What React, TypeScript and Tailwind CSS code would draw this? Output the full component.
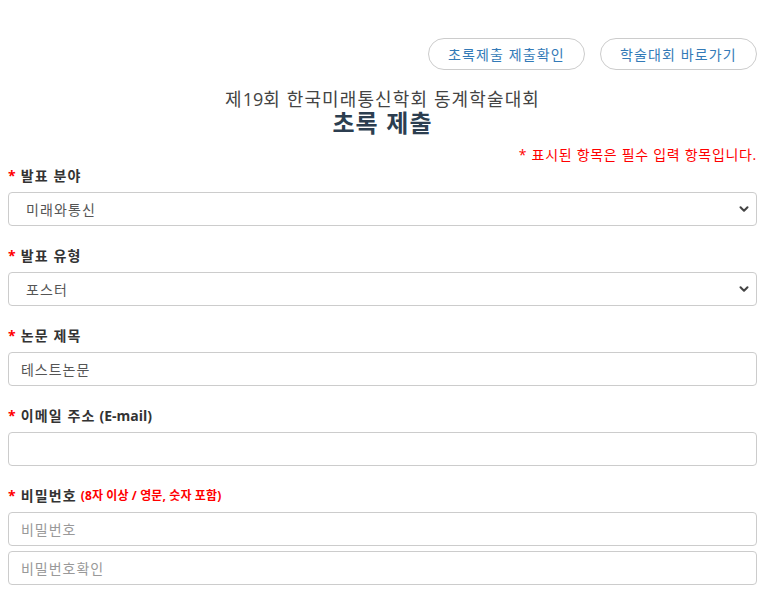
import { ChevronDown } from 'lucide-react';

const FONT = { fontFamily: '"Open Sans", "Noto Sans CJK KR", sans-serif' };

function Label({ text, latin, note }: { text: string; latin?: string; note?: string }) {
  return (
    <div className="h-[16px] flex items-center text-[14px] font-bold text-[#333] mb-[8px] leading-none">
      <span className="text-[#ff0000] mr-[4px]">*</span>
      <span>{text}</span>
      {latin && <span className="tracking-normal ml-[4px]">{latin}</span>}
      {note && <span className="text-[#ff0000] text-[12px] ml-[4px] tracking-[0.01em]">{note}</span>}
    </div>
  );
}

function Select({ value }: { value: string }) {
  return (
    <div className="h-[34px] border border-[#ccc] rounded-[4px] bg-white flex items-center justify-between pl-[17px] pr-[5px] text-[14px] text-[#555]">
      <span>{value}</span>
      <ChevronDown className="w-[14px] h-[14px] text-[#444]" strokeWidth={3.5} />
    </div>
  );
}

function Input({ value, placeholder }: { value?: string; placeholder?: string }) {
  return (
    <input
      readOnly
      defaultValue={value}
      placeholder={placeholder}
      className="block w-full h-[34px] border border-[#ccc] rounded-[4px] bg-white px-[12px] text-[14px] text-[#555] tracking-[0.07em] placeholder:text-[#999] outline-none"
      style={FONT}
    />
  );
}

export default function App() {
  return (
    <div className="bg-white w-[762px] h-[602px] overflow-hidden pl-[8px] pr-[5px] tracking-[0.07em]" style={FONT}>
      <div className="flex justify-end gap-[15px] pt-[38px]">
        <button className="h-[32px] w-[157px] rounded-full border border-[#ccc] text-[14px] text-[#337ab7]">
          초록제출 제출확인
        </button>
        <button className="h-[32px] w-[157px] rounded-full border border-[#ccc] text-[14px] text-[#337ab7]">
          학술대회 바로가기
        </button>
      </div>

      <div className="text-center mt-[19px]">
        <div className="text-[18px] leading-[20px] text-[#444]">
          제<span className="tracking-normal">19</span>회 한국미래통신학회 동계학술대회
        </div>
        <div className="text-[24px] leading-[28px] font-bold text-[#2c3e50]">초록 제출</div>
      </div>

      <div className="text-right text-[14px] text-[#ff0000] leading-[20px] mt-[8px] tracking-[0.05em]">
        * 표시된 항목은 필수 입력 항목입니다.
      </div>

      <div className="mt-[3px] flex flex-col gap-[22px]">
        <div>
          <Label text="발표 분야" />
          <Select value="미래와통신" />
        </div>
        <div>
          <Label text="발표 유형" />
          <Select value="포스터" />
        </div>
        <div>
          <Label text="논문 제목" />
          <Input value="테스트논문" />
        </div>
        <div>
          <Label text="이메일 주소" latin="(E-mail)" />
          <Input />
        </div>
        <div>
          <Label text="비밀번호" note="(8자 이상 / 영문, 숫자 포함)" />
          <div className="flex flex-col gap-[5px]">
            <Input placeholder="비밀번호" />
            <Input placeholder="비밀번호확인" />
          </div>
        </div>
      </div>
    </div>
  );
}
